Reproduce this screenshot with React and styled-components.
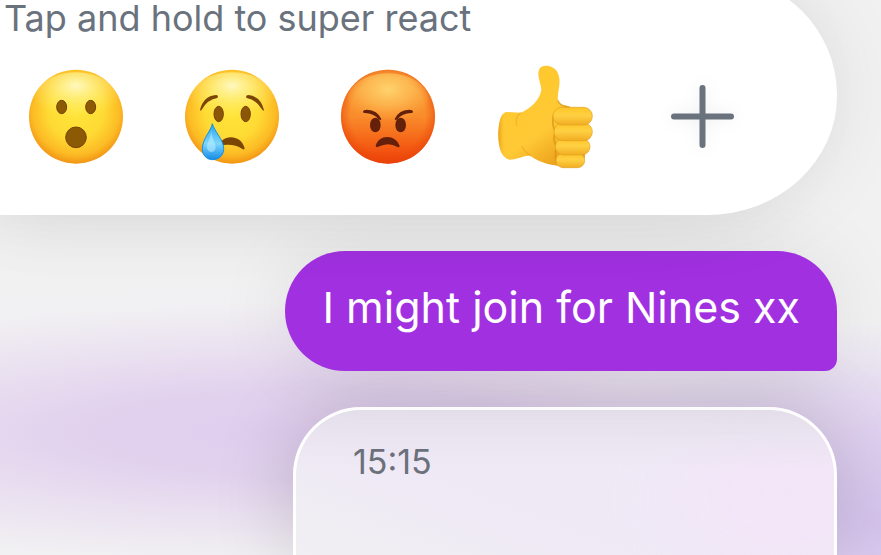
import React from "react";
import styled, { createGlobalStyle } from "styled-components";

const GlobalStyle = createGlobalStyle`
  * {
    box-sizing: border-box;
  }
  body {
    margin: 0;
    font-family: Inter, "Liberation Sans", sans-serif;
  }
`;

export default function App() {
  return (
    <Chat>
      <GlobalStyle />
      <ReactionPicker aria-label="Reactions">
        <Hint>Tap and hold to super react</Hint>
        <ReactionRow>
          <ReactionButton aria-label="Surprised">
            <Surprised />
          </ReactionButton>
          <ReactionButton aria-label="Sad">
            <Sad />
          </ReactionButton>
          <ReactionButton aria-label="Angry">
            <Angry />
          </ReactionButton>
          <ReactionButton aria-label="Like">
            <ThumbsUp />
          </ReactionButton>
          <ReactionButton aria-label="More reactions">
            <Plus />
          </ReactionButton>
        </ReactionRow>
      </ReactionPicker>
      <Bubble>I might join for Nines xx</Bubble>
      <Menu>
        <Time dateTime="15:15">15:15</Time>
      </Menu>
    </Chat>
  );
}

function YellowFace({ id }) {
  return (
    <>
      <defs>
        <radialGradient id={id} cx="0.5" cy="0.44" r="0.58">
          <stop offset="0" stopColor="#ffe53a" />
          <stop offset="0.5" stopColor="#fedb34" />
          <stop offset="0.8" stopColor="#fcbb25" />
          <stop offset="1" stopColor="#f08c10" />
        </radialGradient>
        <radialGradient id={id + "Shine"} cx="0.5" cy="0.25" r="0.6">
          <stop offset="0" stopColor="#fffac8" stopOpacity="0.95" />
          <stop offset="0.5" stopColor="#fff38a" stopOpacity="0.55" />
          <stop offset="1" stopColor="#fff06a" stopOpacity="0" />
        </radialGradient>
      </defs>
      <circle cx="180" cy="185" r="141" fill={`url(#${id})`} />
      <ellipse cx="180" cy="132" rx="124" ry="80" fill={`url(#${id}Shine)`} />
    </>
  );
}

function Surprised() {
  return (
    <Emoji viewBox="0 0 360 360" aria-hidden="true">
      <YellowFace id="surprised" />
      <g fill="#8c5904" stroke="#774403" strokeWidth="3">
        <ellipse cx="137" cy="156" rx="15" ry="20" />
        <ellipse cx="224" cy="156" rx="15" ry="20" />
        <ellipse cx="180" cy="247" rx="31" ry="31" />
      </g>
    </Emoji>
  );
}

function Sad() {
  return (
    <Emoji viewBox="0 0 360 360" aria-hidden="true">
      <defs>
        <linearGradient id="tear" x1="0" y1="0" x2="0" y2="1">
          <stop offset="0" stopColor="#2aa5ee" />
          <stop offset="0.55" stopColor="#7bd6fc" />
          <stop offset="1" stopColor="#168be6" />
        </linearGradient>
      </defs>
      <YellowFace id="sad" />
      <g fill="#8c5608" stroke="#774403" strokeWidth="3">
        <ellipse cx="140" cy="177" rx="14" ry="23" />
        <ellipse cx="221" cy="177" rx="14" ry="23" />
      </g>
      <g fill="#7b4605">
        <path d="M84 165Q94 123 132 120Q141 121 136 129Q107 133 89 164Q85 169 84 165Z" />
        <path d="M276 165Q266 124 229 120Q219 121 224 129Q252 133 271 164Q275 169 276 165Z" />
        <path d="M148 259C166 240 207 241 218 280Q217 286 210 281Q188 266 153 270Z" />
      </g>
      <path
        d="M121 206C118 226 91 252 91 281C91 300 104 314 122 314C141 314 156 300 155 280C154 254 128 230 121 206Z"
        fill="url(#tear)"
        stroke="#168ee4"
        strokeWidth="3"
      />
      <path
        d="M117 226C119 245 104 264 104 277Q107 291 119 291Q131 289 131 276C130 261 119 248 117 226Z"
        fill="#c9f4ff"
        opacity="0.5"
      />
    </Emoji>
  );
}

function Angry() {
  return (
    <Emoji viewBox="0 0 360 360" aria-hidden="true">
      <defs>
        <linearGradient id="angry" x1="0" y1="0" x2="0" y2="1">
          <stop offset="0" stopColor="#f8a53b" />
          <stop offset="0.5" stopColor="#f98b2b" />
          <stop offset="0.8" stopColor="#f45f14" />
          <stop offset="1" stopColor="#ee3d0b" />
        </linearGradient>
        <radialGradient id="angryRim" cx="0.5" cy="0.48" r="0.53">
          <stop offset="0.75" stopColor="#ed500b" stopOpacity="0" />
          <stop offset="1" stopColor="#e74409" stopOpacity="0.75" />
        </radialGradient>
        <radialGradient id="angryShine" cx="0.5" cy="0.3" r="0.6">
          <stop offset="0" stopColor="#ffd670" stopOpacity="0.95" />
          <stop offset="0.5" stopColor="#ffc45c" stopOpacity="0.65" />
          <stop offset="1" stopColor="#ffb548" stopOpacity="0" />
        </radialGradient>
      </defs>
      <circle cx="180" cy="185" r="141" fill="url(#angry)" />
      <circle cx="180" cy="185" r="141" fill="url(#angryRim)" />
      <ellipse cx="180" cy="135" rx="122" ry="80" fill="url(#angryShine)" />
      <g fill="#64200a">
        <ellipse cx="142" cy="210" rx="16" ry="22" />
        <ellipse cx="218" cy="210" rx="16" ry="22" />
        <path d="M105 171Q105 164 117 164Q148 165 160 192Q158 199 151 192Q138 176 110 174Q105 174 105 171Z" />
        <path d="M255 171Q255 164 243 164Q212 165 200 192Q202 199 209 192Q222 176 250 174Q255 174 255 171Z" />
        <path d="M143 272C152 237 203 237 215 273Q214 280 207 275Q182 260 151 275Q144 279 143 272Z" />
      </g>
    </Emoji>
  );
}

function ThumbsUp() {
  return (
    <Emoji viewBox="-3 0 360 360" aria-hidden="true">
      <defs>
        <linearGradient id="hand" x1="0" y1="0" x2="0.6" y2="1">
          <stop offset="0" stopColor="#ffc82a" />
          <stop offset="0.7" stopColor="#ffc936" />
          <stop offset="1" stopColor="#eda31d" />
        </linearGradient>
        <linearGradient id="finger" x1="0" y1="0" x2="0" y2="1">
          <stop offset="0" stopColor="#ffc526" />
          <stop offset="0.45" stopColor="#ffd043" />
          <stop offset="1" stopColor="#f2ad22" />
        </linearGradient>
        <linearGradient id="wrist" x1="0" y1="0" x2="1" y2="0">
          <stop offset="0" stopColor="#e99e16" />
          <stop offset="0.3" stopColor="#ffc52d" stopOpacity="0" />
        </linearGradient>
      </defs>
      <path
        d="M64 171L108 173C139 159 164 134 169 106C169 85 155 67 162 44C168 26 207 29 218 53C232 82 215 111 219 136C222 154 245 151 260 158L300 164V308L253 333C216 336 168 326 137 303C117 300 101 314 74 314C50 310 40 279 40 237C41 202 47 174 64 171Z"
        fill="url(#hand)"
      />
      <path
        d="M64 171L108 173V304L74 314C50 310 40 279 40 237C41 202 47 174 64 171Z"
        fill="url(#wrist)"
      />
      <path
        d="M219 136C222 151 236 152 254 157Q205 158 204 191Q201 213 212 231Q201 252 214 273Q208 307 216 326"
        fill="none"
        stroke="#d78b12"
        strokeWidth="5"
        opacity="0.65"
      />
      <g fill="url(#finger)" stroke="#dfa022" strokeWidth="2">
        <rect x="213" y="295" width="86" height="43" rx="21" />
        <rect x="211" y="250" width="104" height="50" rx="25" />
        <rect x="207" y="204" width="115" height="53" rx="26" />
        <rect x="204" y="157" width="118" height="53" rx="26" />
      </g>
      <path
        d="M108 173Q89 186 95 211M137 303Q119 291 111 275"
        fill="none"
        stroke="#e39b16"
        strokeWidth="4"
        strokeLinecap="round"
        opacity="0.4"
      />
    </Emoji>
  );
}

function Plus() {
  return (
    <PlusIcon viewBox="0 0 120 120" aria-hidden="true">
      <path d="M34 61.5H91M62.5 33V90" />
    </PlusIcon>
  );
}

const Chat = styled.main`
  display: flex;
  flex-direction: column;
  align-items: flex-end;
  gap: 36px;
  min-height: 100vh;
  padding-right: 44px;
  overflow: hidden;
  background:
    radial-gradient(ellipse 40% 36% at 100% 94%, #d6c3ee 0%, #dbcbefcc 45%, #e9dff000 100%),
    radial-gradient(ellipse 90% 27% at 35% 78%, #dfcdee 0%, #e2d2ee 30%, #e9def0bb 60%, #f0ebf340 85%, #f0eff200 100%),
    #f1f1f2;
`;

/* the top edge of the picker is scrolled out of view */
const ReactionPicker = styled.section`
  position: relative;
  z-index: 2;
  align-self: stretch;
  margin-top: -24px;
  padding: 24px 0 40px;
  border-radius: 0 120px 130px 0 / 0 119px 119px 0;
  background: #fff;
  box-shadow:
    0 0 80px rgba(0, 0, 0, 0.08),
    -40px 0 80px rgba(0, 0, 0, 0.06);
`;

const Hint = styled.p`
  margin: 0 0 19px;
  padding-left: 4px;
  font-size: 36px;
  line-height: 36px;
  color: #69727d;
`;

const ReactionRow = styled.div`
  display: flex;
  gap: 36px;
  padding-left: 16px;
`;

const ReactionButton = styled.button`
  display: flex;
  flex: none;
  padding: 0;
  border: none;
  background: none;
  cursor: pointer;
`;

const Emoji = styled.svg`
  width: 120px;
  height: 120px;
`;

const PlusIcon = styled(Emoji)`
  fill: none;
  stroke: #69727d;
  stroke-width: 6px;
  stroke-linecap: round;
  filter: drop-shadow(0 0 8px rgba(0, 0, 0, 0.08));
`;

const Bubble = styled.div`
  position: relative;
  z-index: 1;
  padding: 30px 37px 38px;
  border-radius: 60px 60px 12px 60px;
  background: #a131e0;
  box-shadow: 0 0 80px rgba(0, 0, 0, 0.08);
  font-size: 43px;
  line-height: 52px;
  color: #fff;
`;

const Menu = styled.section`
  flex: 1;
  width: 65%;
  padding: 32px 57px;
  border: 3px solid #fff;
  border-bottom: none;
  border-radius: 68px 68px 0 0;
  background:
    linear-gradient(#dfdbe599 0, #efeaf600 60px),
    radial-gradient(ellipse 34% 80% at 92% 60%, #f3e5f8 0%, #f0e6f700 100%),
    linear-gradient(20deg, #f0eff2 0%, #efe9f6 40%);
  box-shadow: 0 0 80px rgba(0, 0, 0, 0.17);
`;

const Time = styled.time`
  display: block;
  font-size: 34px;
  line-height: 40px;
  color: #6b707b;
`;
